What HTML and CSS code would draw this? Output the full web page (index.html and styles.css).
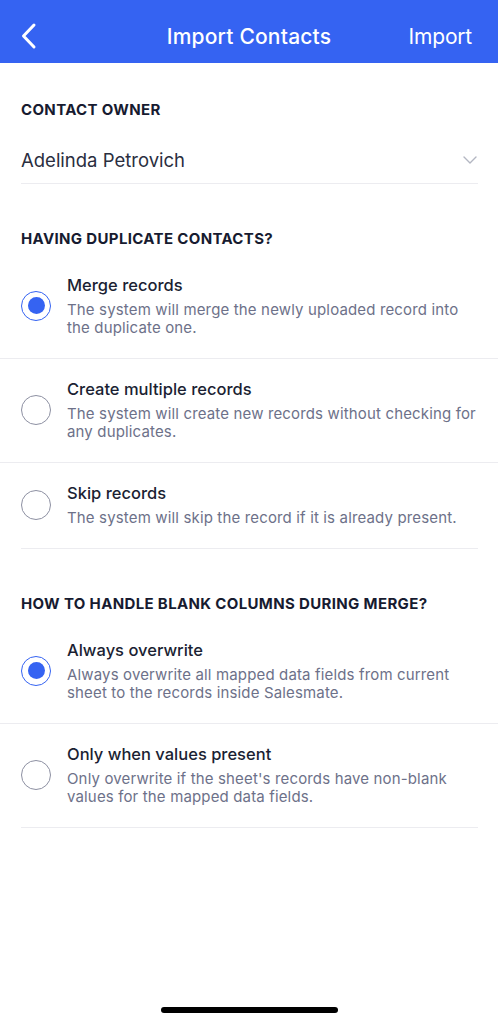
FILE: index.html
```html
<!DOCTYPE html>
<html lang="en">
<head>
    <meta charset="UTF-8">
    <meta name="viewport" content="width=device-width, initial-scale=1.0">
    <title>Import Contacts</title>
    <link rel="stylesheet" href="styles.css">
</head>
<body>
    <div class="page">
        <header class="topbar">
            <a class="back" href="#" aria-label="Back">
                <svg width="18" height="28" viewBox="0 0 18 28">
                    <path d="M14 3 L3.5 14 L14 25" fill="none" stroke="#fff" stroke-width="3" stroke-linecap="round" stroke-linejoin="round"/>
                </svg>
            </a>
            <h1 class="topbar-title">Import Contacts</h1>
            <a class="topbar-action" href="#">Import</a>
        </header>

        <section class="section">
            <h2 class="section-title">CONTACT OWNER</h2>
            <div class="select-field">
                <span>Adelinda Petrovich</span>
                <svg width="14" height="8" viewBox="0 0 14 8">
                    <path d="M1 1 L7 7 L13 1" fill="none" stroke="#b3b6c2" stroke-width="1.4" stroke-linecap="round" stroke-linejoin="round"/>
                </svg>
            </div>
        </section>

        <section class="section">
            <h2 class="section-title">HAVING DUPLICATE CONTACTS?</h2>
            <div class="options">
                <label class="option">
                    <span class="radio checked"></span>
                    <span class="option-text">
                        <span class="option-name">Merge records</span>
                        <span class="option-desc">The system will merge the newly uploaded record into the duplicate one.</span>
                    </span>
                </label>
                <label class="option">
                    <span class="radio"></span>
                    <span class="option-text">
                        <span class="option-name">Create multiple records</span>
                        <span class="option-desc">The system will create new records without checking for any duplicates.</span>
                    </span>
                </label>
                <label class="option">
                    <span class="radio"></span>
                    <span class="option-text">
                        <span class="option-name">Skip records</span>
                        <span class="option-desc">The system will skip the record if it is already present.</span>
                    </span>
                </label>
            </div>
        </section>

        <section class="section">
            <h2 class="section-title">HOW TO HANDLE BLANK COLUMNS DURING MERGE?</h2>
            <div class="options">
                <label class="option">
                    <span class="radio checked"></span>
                    <span class="option-text">
                        <span class="option-name">Always overwrite</span>
                        <span class="option-desc">Always overwrite all mapped data fields from current sheet to the records inside Salesmate.</span>
                    </span>
                </label>
                <label class="option">
                    <span class="radio"></span>
                    <span class="option-text">
                        <span class="option-name">Only when values present</span>
                        <span class="option-desc">Only overwrite if the sheet's records have non-blank values for the mapped data fields.</span>
                    </span>
                </label>
            </div>
        </section>

        <div class="home-indicator"></div>
    </div>
</body>
</html>
```

FILE: styles.css
```css
* {
    box-sizing: border-box;
}
body {
    margin: 0;
    font-family: Inter, "Open Sans", sans-serif;
    background: #fff;
    color: #1b1f33;
}
.page {
    min-height: 100vh;
    display: flex;
    flex-direction: column;
}
.topbar {
    height: 63px;
    padding: 9px 26px 0;
    background: #3563f2;
    display: grid;
    grid-template-columns: 1fr auto 1fr;
    align-items: center;
    color: #fff;
}
.back {
    display: flex;
    align-items: center;
    margin-left: -6px;
}
.topbar-title {
    margin: 0;
    font-size: 21px;
    font-weight: 500;
    letter-spacing: 0.2px;
}
.topbar-action {
    justify-self: end;
    color: #fff;
    text-decoration: none;
    font-size: 21px;
    letter-spacing: -0.2px;
}
.section {
    padding-top: 37px;
}
.section + .section {
    padding-top: 45px;
}
.section-title {
    margin: 0 20px 6px 21px;
    font-size: 15px;
    line-height: 20px;
    font-weight: 700;
    letter-spacing: 0.35px;
    color: #171b30;
}
.select-field {
    margin: 0 20px 0 21px;
    padding: 22px 1px 11px 0;
    border-bottom: 1px solid #ececf0;
    display: flex;
    justify-content: space-between;
    align-items: center;
    font-size: 18.5px;
    line-height: 24px;
    color: #2a2e40;
}
.options::after {
    content: "";
    display: block;
    margin: 0 20px 0 21px;
    border-bottom: 1px solid #ececf0;
}
.option {
    display: flex;
    align-items: center;
    gap: 16px;
    padding: 19px 20px 21px 21px;
    border-bottom: 1px solid #ececf0;
}
.option:last-child {
    border-bottom: none;
}
.radio {
    flex: none;
    width: 30px;
    height: 30px;
    border-radius: 50%;
    border: 1.5px solid #8d90a2;
    display: flex;
    align-items: center;
    justify-content: center;
}
.radio.checked {
    border-color: #3563f2;
}
.radio.checked::after {
    content: "";
    width: 17px;
    height: 17px;
    border-radius: 50%;
    background: #3563f2;
}
.option-text {
    display: flex;
    flex-direction: column;
    gap: 5px;
}
.option-name {
    font-size: 16.5px;
    line-height: 22px;
    font-weight: 500;
    color: #1b1f33;
}
.option-desc {
    font-size: 15px;
    line-height: 18px;
    letter-spacing: 0.15px;
    color: #6d7189;
}
.home-indicator {
    margin: auto auto 11px;
    width: 177px;
    height: 6px;
    border-radius: 3px;
    background: #000;
}
```
